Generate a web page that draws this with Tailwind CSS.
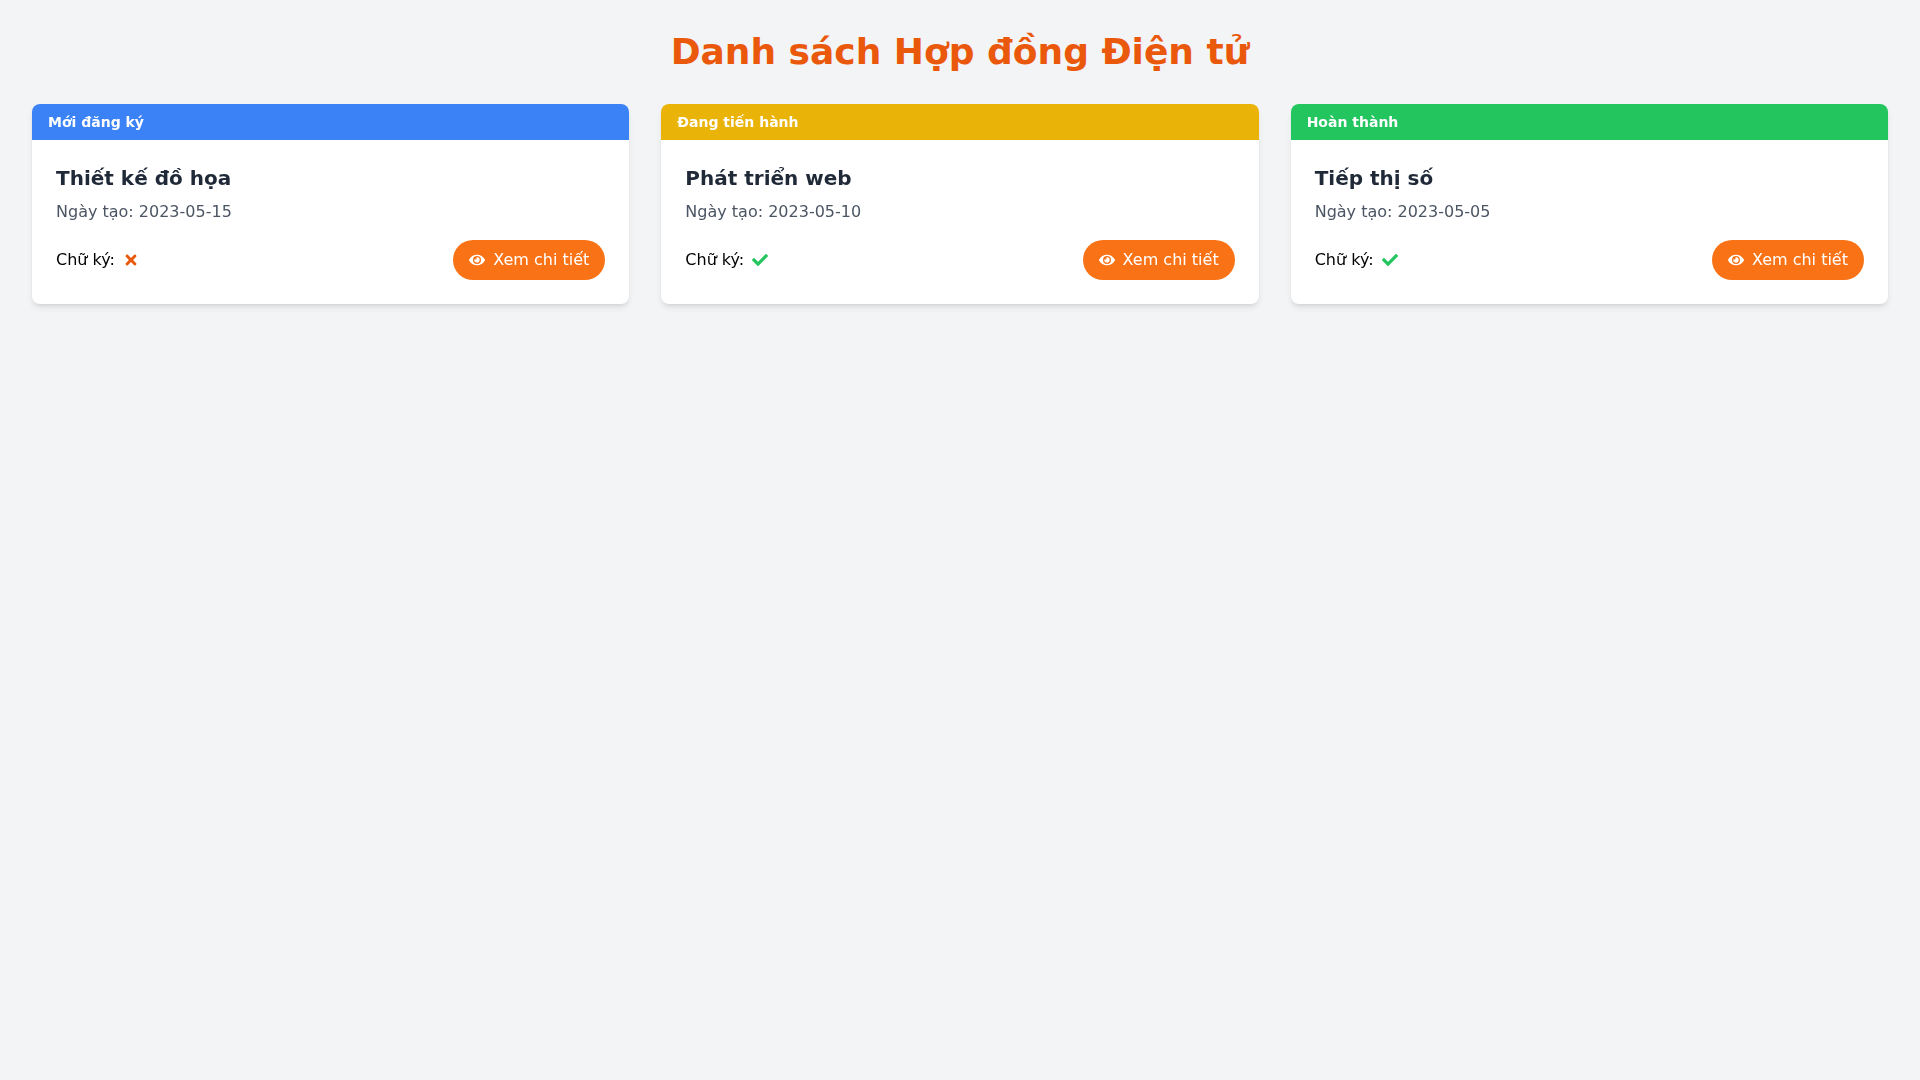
<!DOCTYPE html>
<html lang="vi">
<head>
    <meta charset="UTF-8">
    <meta name="viewport" content="width=device-width, initial-scale=1.0">
    <title>Danh sách Hợp đồng Điện tử</title>
    <script src="https://cdn.jsdelivr.net/npm/@tailwindcss/browser@4"></script>
</head>
<body class="bg-[#f3f4f6] min-h-screen p-8 font-['DejaVu_Sans',sans-serif]">
    <h1 class="text-4xl font-bold text-center text-[#ea580c] mb-8">Danh sách Hợp đồng Điện tử</h1>
    <div class="grid grid-cols-3 gap-8">
        <article class="bg-white rounded-lg shadow-md overflow-hidden transform-gpu">
            <div class="bg-[#3b82f6] text-white text-sm font-semibold px-4 py-2">Mới đăng ký</div>
            <div class="p-6">
                <h2 class="text-xl font-semibold text-[#1f2937] mb-2">Thiết kế đồ họa</h2>
                <p class="text-[#4b5563] mb-4">Ngày tạo: 2023-05-15</p>
                <div class="flex justify-between items-center">
                    <div class="flex items-center gap-2">
                        <span>Chữ ký:</span>
                        <svg class="w-4 h-4 text-[#ea580c]" viewBox="0 0 352 512" fill="currentColor"><path d="M242.72 256l100.07-100.07c12.28-12.28 12.28-32.19 0-44.48l-22.24-22.24c-12.28-12.28-32.19-12.28-44.48 0L176 189.28 75.93 89.21c-12.28-12.28-32.19-12.28-44.48 0L9.21 111.45c-12.28 12.28-12.28 32.19 0 44.48L109.28 256 9.21 356.07c-12.28 12.28-12.28 32.19 0 44.48l22.24 22.24c12.28 12.28 32.2 12.28 44.48 0L176 322.72l100.07 100.07c12.28 12.28 32.2 12.28 44.48 0l22.24-22.24c12.28-12.28 12.28-32.19 0-44.48L242.72 256z"/></svg>
                    </div>
                    <button class="flex items-center gap-2 bg-[#f97316] text-white rounded-full px-4 py-2">
                        <svg class="w-4 h-4" viewBox="0 0 576 512" fill="currentColor"><path d="M572.52 241.4C518.29 135.59 410.93 64 288 64S57.68 135.64 3.48 241.41a32.35 32.35 0 0 0 0 29.19C57.71 376.41 165.07 448 288 448s230.32-71.64 284.52-177.41a32.35 32.35 0 0 0 0-29.19zM288 400a144 144 0 1 1 144-144 143.93 143.93 0 0 1-144 144zm0-240a95.31 95.31 0 0 0-25.31 3.79 47.85 47.85 0 0 1-66.9 66.9A95.78 95.78 0 1 0 288 160z"/></svg>
                        Xem chi tiết
                    </button>
                </div>
            </div>
        </article>
        <article class="bg-white rounded-lg shadow-md overflow-hidden transform-gpu">
            <div class="bg-[#eab308] text-white text-sm font-semibold px-4 py-2">Đang tiến hành</div>
            <div class="p-6">
                <h2 class="text-xl font-semibold text-[#1f2937] mb-2">Phát triển web</h2>
                <p class="text-[#4b5563] mb-4">Ngày tạo: 2023-05-10</p>
                <div class="flex justify-between items-center">
                    <div class="flex items-center gap-2">
                        <span>Chữ ký:</span>
                        <svg class="w-4 h-4 text-[#22c55e]" viewBox="0 0 512 512" fill="currentColor"><path d="M173.898 439.404l-166.4-166.4c-9.997-9.997-9.997-26.206 0-36.204l36.203-36.204c9.997-9.998 26.207-9.998 36.204 0L192 312.69 432.095 72.596c9.997-9.997 26.207-9.997 36.204 0l36.203 36.204c9.997 9.997 9.997 26.206 0 36.204l-294.4 294.401c-9.998 9.997-26.207 9.997-36.204-.001z"/></svg>
                    </div>
                    <button class="flex items-center gap-2 bg-[#f97316] text-white rounded-full px-4 py-2">
                        <svg class="w-4 h-4" viewBox="0 0 576 512" fill="currentColor"><path d="M572.52 241.4C518.29 135.59 410.93 64 288 64S57.68 135.64 3.48 241.41a32.35 32.35 0 0 0 0 29.19C57.71 376.41 165.07 448 288 448s230.32-71.64 284.52-177.41a32.35 32.35 0 0 0 0-29.19zM288 400a144 144 0 1 1 144-144 143.93 143.93 0 0 1-144 144zm0-240a95.31 95.31 0 0 0-25.31 3.79 47.85 47.85 0 0 1-66.9 66.9A95.78 95.78 0 1 0 288 160z"/></svg>
                        Xem chi tiết
                    </button>
                </div>
            </div>
        </article>
        <article class="bg-white rounded-lg shadow-md overflow-hidden transform-gpu">
            <div class="bg-[#22c55e] text-white text-sm font-semibold px-4 py-2">Hoàn thành</div>
            <div class="p-6">
                <h2 class="text-xl font-semibold text-[#1f2937] mb-2">Tiếp thị số</h2>
                <p class="text-[#4b5563] mb-4">Ngày tạo: 2023-05-05</p>
                <div class="flex justify-between items-center">
                    <div class="flex items-center gap-2">
                        <span>Chữ ký:</span>
                        <svg class="w-4 h-4 text-[#22c55e]" viewBox="0 0 512 512" fill="currentColor"><path d="M173.898 439.404l-166.4-166.4c-9.997-9.997-9.997-26.206 0-36.204l36.203-36.204c9.997-9.998 26.207-9.998 36.204 0L192 312.69 432.095 72.596c9.997-9.997 26.207-9.997 36.204 0l36.203 36.204c9.997 9.997 9.997 26.206 0 36.204l-294.4 294.401c-9.998 9.997-26.207 9.997-36.204-.001z"/></svg>
                    </div>
                    <button class="flex items-center gap-2 bg-[#f97316] text-white rounded-full px-4 py-2">
                        <svg class="w-4 h-4" viewBox="0 0 576 512" fill="currentColor"><path d="M572.52 241.4C518.29 135.59 410.93 64 288 64S57.68 135.64 3.48 241.41a32.35 32.35 0 0 0 0 29.19C57.71 376.41 165.07 448 288 448s230.32-71.64 284.52-177.41a32.35 32.35 0 0 0 0-29.19zM288 400a144 144 0 1 1 144-144 143.93 143.93 0 0 1-144 144zm0-240a95.31 95.31 0 0 0-25.31 3.79 47.85 47.85 0 0 1-66.9 66.9A95.78 95.78 0 1 0 288 160z"/></svg>
                        Xem chi tiết
                    </button>
                </div>
            </div>
        </article>
    </div>
</body>
</html>
